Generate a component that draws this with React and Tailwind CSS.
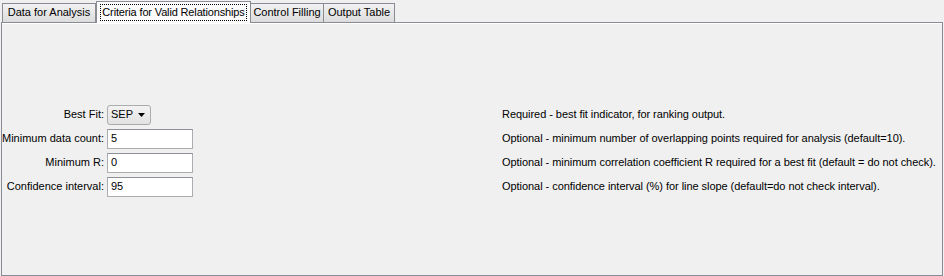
const TABS = [
  { label: "Data for Analysis", w: "w-[94px]" },
  { label: "Criteria for Valid Relationships", w: "w-[155px]", selected: true },
  { label: "Control Filling", w: "w-[74px]" },
  { label: "Output Table", w: "w-[72px]" },
];

const ROWS = [
  { label: "Best Fit:", combo: "SEP", desc: "Required - best fit indicator, for ranking output." },
  { label: "Minimum data count:", value: "5", desc: "Optional - minimum number of overlapping points required for analysis (default=10)." },
  { label: "Minimum R:", value: "0", desc: "Optional - minimum correlation coefficient R required for a best fit (default = do not check)." },
  { label: "Confidence interval:", value: "95", desc: "Optional - confidence interval (%) for line slope (default=do not check interval)." },
];

function Tab({ tab }) {
  if (tab.selected) {
    return (
      <div
        className={`${tab.w} h-[22px] -mb-px relative z-10 flex items-start justify-center pt-[2px] border border-b-0 border-[#898c95] bg-[#fbfbfb] whitespace-nowrap`}
      >
        <div className="px-[1px] h-[17px] leading-[15px] tracking-[-0.15px] border border-dotted border-black">
          {tab.label}
        </div>
      </div>
    );
  }
  return (
    <div
      className={`${tab.w} h-[19px] flex items-center justify-center border border-b-0 border-[#898c95] bg-gradient-to-b from-[#f2f2f2] to-[#dcdcdc] -ml-px first:ml-0 whitespace-nowrap`}
    >
      <span className="pb-px">{tab.label}</span>
    </div>
  );
}

export default function App() {
  return (
    <div className="w-[944px] h-[276px] bg-[#f0f0f0] text-black text-[11px] font-['Liberation_Sans',Arial,sans-serif] overflow-hidden">
      <div className="flex items-end h-[22px] pl-[2px]">
        {TABS.map((t) => (
          <Tab key={t.label} tab={t} />
        ))}
      </div>
      <div className="ml-px w-[942px] h-[254px] border border-[#898c95] bg-[#f0f0f0] flex flex-col">
        <div className="h-px bg-white" />
        <div className="flex-1 flex items-center pt-[2px]">
          <div className="grid grid-cols-[105px_86px_1fr] gap-y-[4px] items-center w-full">
            {ROWS.map((r) => (
              <div key={r.label} className="contents">
                <div className="text-right pr-[3px] whitespace-nowrap">{r.label}</div>
                <div>
                  {r.combo ? (
                    <div className="w-[44px] h-[20px] flex items-center justify-between pl-[3px] pr-[5px] border border-[#acacac] rounded-[3px] bg-gradient-to-b from-[#f3f3f3] to-[#e2e2e2]">
                      <span>{r.combo}</span>
                      <svg width="7" height="4" viewBox="0 0 7 4">
                        <path d="M0 0h7L3.5 4z" fill="#000" />
                      </svg>
                    </div>
                  ) : (
                    <div className="w-[86px] h-[20px] flex items-center pl-[3px] bg-white border border-[#abadb3] border-t-[#8e9199]">
                      {r.value}
                    </div>
                  )}
                </div>
                <div className="pl-[309px] whitespace-nowrap tracking-[-0.05px]">{r.desc}</div>
              </div>
            ))}
          </div>
        </div>
      </div>
    </div>
  );
}
